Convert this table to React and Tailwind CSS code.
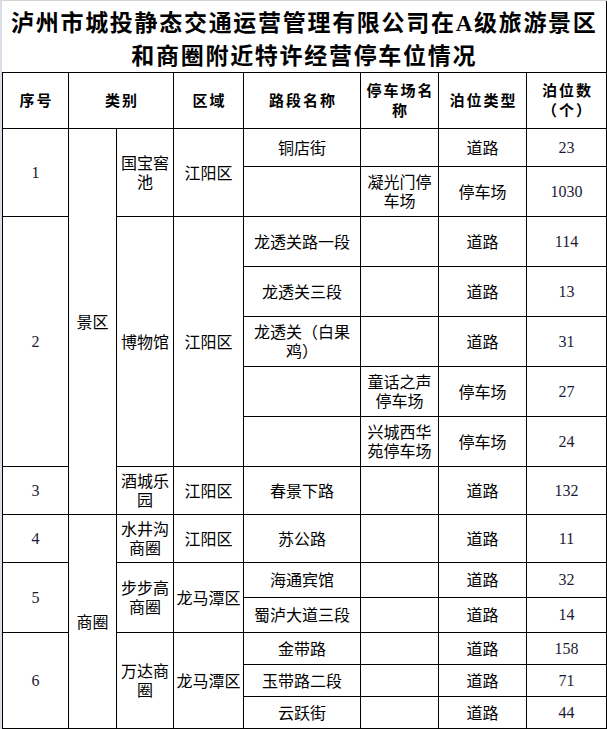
import React from "react";

const cjk = "font-['Noto_Sans_CJK_SC',sans-serif]";

function Td({ children, rowSpan, colSpan, num }) {
  return (
    <td
      rowSpan={rowSpan}
      colSpan={colSpan}
      className={
        num
          ? "border border-black p-0 text-center align-middle font-['Liberation_Serif',serif] text-[16px] leading-[19px] text-[#1b1b35]"
          : "border border-black px-[2px] py-0 text-center align-middle text-[16px] leading-[19px] text-black"
      }
    >
      {children}
    </td>
  );
}

function Th({ children, colSpan }) {
  return (
    <th
      colSpan={colSpan}
      className="border border-black py-0 pl-[5px] pr-[3px] text-center align-middle text-[15px] font-bold leading-[20px] tracking-[2px] text-black"
    >
      {children}
    </th>
  );
}

export default function App() {
  return (
    <div className={`w-[607px] h-[729px] bg-white border-l-2 border-t border-l-[#d8dfe9] border-t-[#d4d4d4] ${cjk}`}>
      <table className="w-[604px] table-fixed border-collapse">
        <colgroup>
          <col className="w-[66px]" />
          <col className="w-[48px]" />
          <col className="w-[57px]" />
          <col className="w-[70px]" />
          <col className="w-[117px]" />
          <col className="w-[78px]" />
          <col className="w-[88px]" />
          <col className="w-[80px]" />
        </colgroup>
        <tbody>
          <tr className="h-[71px]">
            <td colSpan={8} className="border-r border-b border-black p-0 text-center align-middle">
              <div className="whitespace-nowrap pt-[2px] text-[23px] font-bold leading-[30px] tracking-[1.7px] text-black">
                <div>
                  泸州市城投静态交通运营管理有限公司在<span className="font-['Liberation_Serif',serif]">A</span>级旅游景区
                </div>
                <div>和商圈附近特许经营停车位情况</div>
              </div>
            </td>
          </tr>
          <tr className="h-[56px]">
            <Th>序号</Th>
            <Th colSpan={2}>类别</Th>
            <Th>区域</Th>
            <Th>路段名称</Th>
            <Th>停车场名称</Th>
            <Th>泊位类型</Th>
            <Th>泊位数（个）</Th>
          </tr>

          <tr className="h-[38px]">
            <Td num rowSpan={2}>1</Td>
            <Td rowSpan={8}>景区</Td>
            <Td rowSpan={2}>国宝窖池</Td>
            <Td rowSpan={2}>江阳区</Td>
            <Td>铜店街</Td>
            <Td></Td>
            <Td>道路</Td>
            <Td num>23</Td>
          </tr>
          <tr className="h-[50px]">
            <Td></Td>
            <Td>凝光门停车场</Td>
            <Td>停车场</Td>
            <Td num>1030</Td>
          </tr>

          <tr className="h-[50px]">
            <Td num rowSpan={5}>2</Td>
            <Td rowSpan={5}>博物馆</Td>
            <Td rowSpan={5}>江阳区</Td>
            <Td>龙透关路一段</Td>
            <Td></Td>
            <Td>道路</Td>
            <Td num>114</Td>
          </tr>
          <tr className="h-[50px]">
            <Td>龙透关三段</Td>
            <Td></Td>
            <Td>道路</Td>
            <Td num>13</Td>
          </tr>
          <tr className="h-[50px]">
            <Td>龙透关（白果鸡）</Td>
            <Td></Td>
            <Td>道路</Td>
            <Td num>31</Td>
          </tr>
          <tr className="h-[50px]">
            <Td></Td>
            <Td>童话之声停车场</Td>
            <Td>停车场</Td>
            <Td num>27</Td>
          </tr>
          <tr className="h-[50px]">
            <Td></Td>
            <Td>兴城西华苑停车场</Td>
            <Td>停车场</Td>
            <Td num>24</Td>
          </tr>

          <tr className="h-[48px]">
            <Td num>3</Td>
            <Td>酒城乐园</Td>
            <Td>江阳区</Td>
            <Td>春景下路</Td>
            <Td></Td>
            <Td>道路</Td>
            <Td num>132</Td>
          </tr>

          <tr className="h-[48px]">
            <Td num>4</Td>
            <Td rowSpan={6}>商圈</Td>
            <Td>水井沟商圈</Td>
            <Td>江阳区</Td>
            <Td>苏公路</Td>
            <Td></Td>
            <Td>道路</Td>
            <Td num>11</Td>
          </tr>

          <tr className="h-[35px]">
            <Td num rowSpan={2}>5</Td>
            <Td rowSpan={2}>步步高商圈</Td>
            <Td rowSpan={2}>龙马潭区</Td>
            <Td>海通宾馆</Td>
            <Td></Td>
            <Td>道路</Td>
            <Td num>32</Td>
          </tr>
          <tr className="h-[35px]">
            <Td>蜀泸大道三段</Td>
            <Td></Td>
            <Td>道路</Td>
            <Td num>14</Td>
          </tr>

          <tr className="h-[32px]">
            <Td num rowSpan={3}>6</Td>
            <Td rowSpan={3}>万达商圈</Td>
            <Td rowSpan={3}>龙马潭区</Td>
            <Td>金带路</Td>
            <Td></Td>
            <Td>道路</Td>
            <Td num>158</Td>
          </tr>
          <tr className="h-[32px]">
            <Td>玉带路二段</Td>
            <Td></Td>
            <Td>道路</Td>
            <Td num>71</Td>
          </tr>
          <tr className="h-[32px]">
            <Td>云跃街</Td>
            <Td></Td>
            <Td>道路</Td>
            <Td num>44</Td>
          </tr>
        </tbody>
      </table>
    </div>
  );
}
